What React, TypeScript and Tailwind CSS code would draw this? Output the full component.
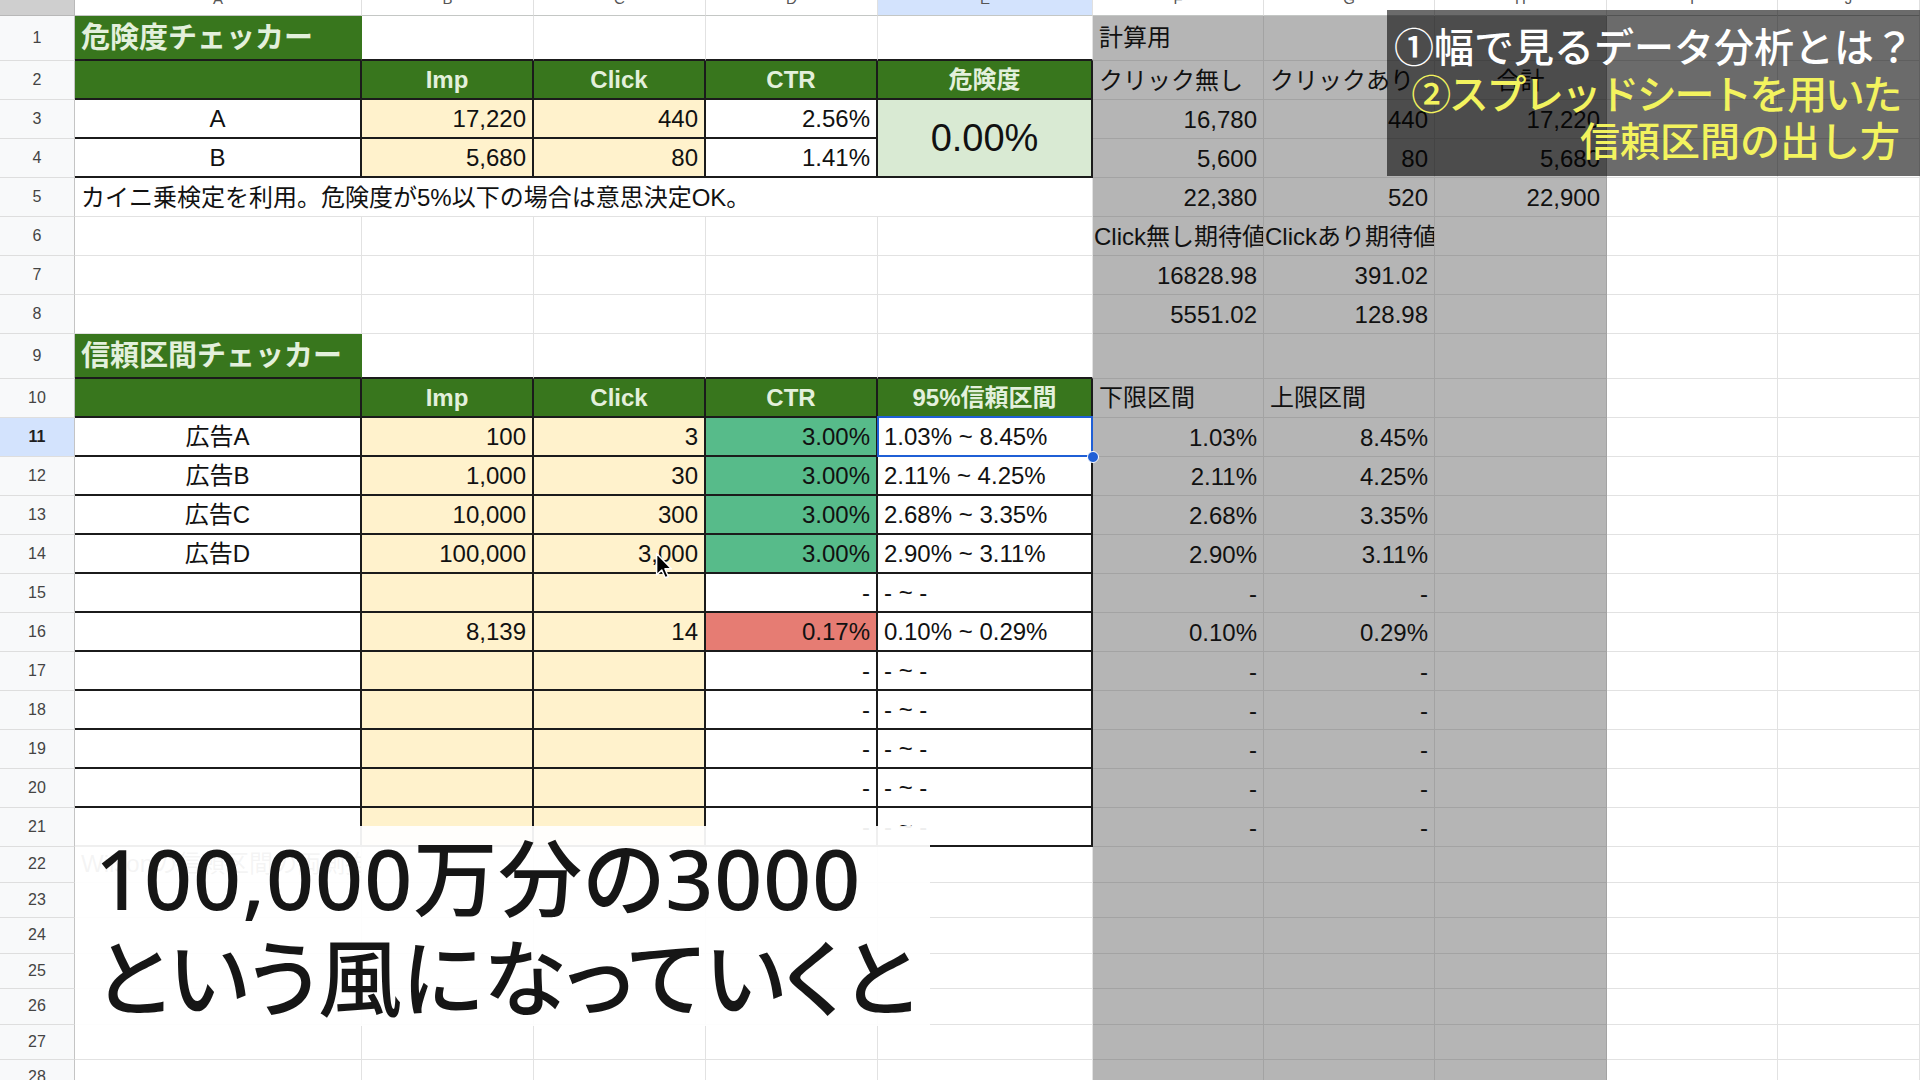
import { Fragment } from 'react';
import clsx from 'clsx';

type Kind = 'w' | 'g' | 'dg' | 'y' | 'lg' | 'cg' | 'rd';
type Align = 'l' | 'l0' | 'c' | 'r';

type Cell = {
  k: Kind;
  t?: string;
  a?: Align;
  b?: boolean; // black bottom border
  r?: boolean; // black right border
  mid?: boolean; // vertically centred
  x?: string; // extra classes
  span?: string;
  sel?: boolean;
};

// background + gridline colour per fill
const KIND: Record<Kind, { bg: string; gb: string; gr: string }> = {
  w: { bg: 'bg-white', gb: 'border-b-[#e2e2e2]', gr: 'border-r-[#e2e2e2]' },
  g: { bg: 'bg-[#b5b5b5]', gb: 'border-b-[#a3a3a3]', gr: 'border-r-[#a3a3a3]' },
  dg: { bg: 'bg-[#38761d]', gb: 'border-b-[#38761d]', gr: 'border-r-[#38761d]' },
  y: { bg: 'bg-[#fff2cc]', gb: 'border-b-[#fff2cc]', gr: 'border-r-[#fff2cc]' },
  lg: { bg: 'bg-[#d9ead3]', gb: 'border-b-[#d9ead3]', gr: 'border-r-[#d9ead3]' },
  cg: { bg: 'bg-[#57bb8a]', gb: 'border-b-[#57bb8a]', gr: 'border-r-[#57bb8a]' },
  rd: { bg: 'bg-[#e67c73]', gb: 'border-b-[#e67c73]', gr: 'border-r-[#e67c73]' },
};

const ALIGN: Record<Align, string> = {
  l: 'justify-start pl-[6px]',
  l0: 'justify-start pl-[1px] text-[23px]',
  c: 'justify-center',
  r: 'justify-end pr-[6px]',
};

const TITLE = 'text-[29px] font-bold text-[#e3f0dc]';
const HEAD = 'text-[21px] font-bold text-[#e3f0dc]';

const w = (t?: string, o: Partial<Cell> = {}): Cell => ({ k: 'w', t, ...o });
const g = (t?: string, a: Align = 'r'): Cell => ({ k: 'g', t, a });
const box = (k: Kind, t: string, a: Align, o: Partial<Cell> = {}): Cell => ({ k, t, a, b: true, r: true, ...o });
const hd = (t: string): Cell => ({ k: 'dg', t, a: 'c', b: true, r: true, mid: true, x: HEAD });
const blank = (): Cell[] => [w(), w(), w(), w(), w(), g(), g(), g(), w(), w()];

const ads: [string, string, string, Kind, string, string, string, string][] = [
  ['広告A', '100', '3', 'cg', '3.00%', '1.03% ~ 8.45%', '1.03%', '8.45%'],
  ['広告B', '1,000', '30', 'cg', '3.00%', '2.11% ~ 4.25%', '2.11%', '4.25%'],
  ['広告C', '10,000', '300', 'cg', '3.00%', '2.68% ~ 3.35%', '2.68%', '3.35%'],
  ['広告D', '100,000', '3,000', 'cg', '3.00%', '2.90% ~ 3.11%', '2.90%', '3.11%'],
  ['', '', '', 'w', '-', '- ~ -', '-', '-'],
  ['', '8,139', '14', 'rd', '0.17%', '0.10% ~ 0.29%', '0.10%', '0.29%'],
  ['', '', '', 'w', '-', '- ~ -', '-', '-'],
  ['', '', '', 'w', '-', '- ~ -', '-', '-'],
  ['', '', '', 'w', '-', '- ~ -', '-', '-'],
  ['', '', '', 'w', '-', '- ~ -', '-', '-'],
  ['', '', '', 'w', '-', '- ~ -', '-', '-'],
];

const ROWS: Cell[][] = [
  [
    { k: 'dg', t: '危険度チェッカー', a: 'l', b: true, mid: true, x: TITLE },
    w('', { b: true }), w('', { b: true }), w('', { b: true }), w('', { b: true }),
    { k: 'g', t: '計算用', a: 'l', mid: true }, g(), g(), w(), w(),
  ],
  [
    hd(''), hd('Imp'), hd('Click'), hd('CTR'), hd('危険度'),
    g('クリック無し', 'l'), g('クリックあり', 'l'), g('合計', 'c'), w(), w(),
  ],
  [
    box('w', 'A', 'c'), box('y', '17,220', 'r'), box('y', '440', 'r'), box('w', '2.56%', 'r'),
    box('lg', '0.00%', 'c', { mid: true, span: 'row-span-2', x: 'text-[38px] leading-[44px]' }),
    g('16,780'), g('440'), g('17,220'), w(), w(),
  ],
  [
    box('w', 'B', 'c'), box('y', '5,680', 'r'), box('y', '80', 'r'), box('w', '1.41%', 'r'),
    g('5,600'), g('80'), g('5,680'), w(), w(),
  ],
  [
    w('カイニ乗検定を利用。危険度が5%以下の場合は意思決定OK。', { a: 'l', span: 'col-span-5' }),
    g('22,380'), g('520'), g('22,900'), w(), w(),
  ],
  [w(), w(), w(), w(), w(), g('Click無し期待値', 'l0'), g('Clickあり期待値', 'l0'), g(), w(), w()],
  [w(), w(), w(), w(), w(), g('16828.98'), g('391.02'), g(), w(), w()],
  [w(), w(), w(), w(), w(), g('5551.02'), g('128.98'), g(), w(), w()],
  [
    { k: 'dg', t: '信頼区間チェッカー', a: 'l', b: true, mid: true, x: TITLE },
    w('', { b: true }), w('', { b: true }), w('', { b: true }), w('', { b: true }),
    g(), g(), g(), w(), w(),
  ],
  [
    hd(''), hd('Imp'), hd('Click'), hd('CTR'), hd('95%信頼区間'),
    { k: 'g', t: '下限区間', a: 'l', mid: true }, { k: 'g', t: '上限区間', a: 'l', mid: true }, g(), w(), w(),
  ],
  ...ads.map(([name, imp, click, kind, ctr, range, lo, hi], i) => [
    box('w', name, 'c'),
    box('y', imp, 'r'),
    box('y', click, 'r'),
    box(kind, ctr, 'r'),
    box('w', range, 'l', { sel: i === 0 }),
    g(lo), g(hi), g(), w(), w(),
  ]),
  [w('Wilsonの信頼区間の両側推定', { a: 'l', x: 'text-[#666]' }), w(), w(), w(), w(), g(), g(), g(), w(), w()],
  blank(), blank(), blank(), blank(), blank(), blank(),
];

const COLS = ['A', 'B', 'C', 'D', 'E', 'F', 'G', 'H', 'I', 'J'];

function SheetCell({ c }: { c: Cell }) {
  const kind = KIND[c.k];
  return (
    <div
      className={clsx(
        'flex min-w-0 whitespace-nowrap text-[24px] leading-[28px]',
        c.sel ? 'relative overflow-visible' : 'overflow-hidden',
        kind.bg,
        c.b ? 'border-b-2 border-b-[#1b1b1b]' : ['border-b', kind.gb],
        c.r ? 'border-r-2 border-r-[#1b1b1b]' : ['border-r', kind.gr],
        c.mid ? 'items-center' : 'items-end pb-[4px]',
        ALIGN[c.a ?? 'r'],
        c.span,
        c.x,
      )}
    >
      {c.t}
      {c.sel ? (
        <>
          <span className="pointer-events-none absolute -top-[2px] -right-[2px] -bottom-[2px] -left-[1px] border-2 border-[#1f5fd6]" />
          <span className="absolute -right-[8px] -bottom-[8px] z-10 h-[12px] w-[12px] rounded-full border border-white bg-[#1f5fd6]" />
        </>
      ) : null}
    </div>
  );
}

function RowHead({ n }: { n: number }) {
  return (
    <div
      className={clsx(
        'flex items-center justify-center border-r border-b border-r-[#c4c4c4] border-b-[#dedede] text-[16px]',
        n === 11 ? 'bg-[#d3e3fd] font-bold text-[#1f1f1f]' : 'bg-[#f8f9fa] text-[#444]',
      )}
    >
      {n}
    </div>
  );
}

export default function App() {
  return (
    <div className="relative h-[1080px] w-[1920px] overflow-hidden bg-white font-['Liberation_Sans','Noto_Sans_CJK_JP',sans-serif] text-[#111]">
      <div className="grid grid-cols-[75px_287px_172px_172px_172px_215px_171px_171px_172px_171px_142px] grid-rows-[16px_45px_repeat(7,39px)_45px_repeat(12,39px)_repeat(7,35.5px)]">
        {/* column headers, scrolled mostly out of view */}
        <div className="border-r border-b border-r-[#b8b8b8] border-b-[#b8b8b8] bg-[#cfcfcf]" />
        {COLS.map((l) => (
          <div
            key={l}
            className={clsx(
              'flex justify-center overflow-hidden border-r border-b border-r-[#e0e0e0] border-b-[#c4c7c5] text-[15px] leading-[20px] text-[#555]',
              l === 'E' ? 'bg-[#d3e3fd]' : 'bg-white',
            )}
          >
            <span className="-mt-[11px]">{l}</span>
          </div>
        ))}

        {ROWS.map((row, i) => (
          <Fragment key={i}>
            <RowHead n={i + 1} />
            {row.map((c, j) => (
              <SheetCell key={j} c={c} />
            ))}
          </Fragment>
        ))}
      </div>

      {/* mouse pointer */}
      <svg className="absolute left-[655px] top-[552px]" width="18" height="28" viewBox="0 0 12 19">
        <path
          d="M1 1 L1 15.5 L4.5 12.2 L6.8 17.5 L8.9 16.6 L6.6 11.4 L11 11.4 Z"
          fill="#000"
          stroke="#fff"
          strokeWidth="1"
          strokeLinejoin="round"
        />
      </svg>

      {/* video title overlay */}
      <div className="absolute top-[10px] right-0 left-[1387px] flex h-[166px] flex-col items-end whitespace-nowrap bg-black/[0.58] pt-[12px] font-['Noto_Sans_CJK_JP',sans-serif] text-[40px] font-medium leading-[47px]">
        <div className="pr-[6px] text-white">①幅で見るデータ分析とは？</div>
        <div className="pr-[20px] tracking-[-2.4px] text-[#f3f35e]">②スプレッドシートを用いた</div>
        <div className="pr-[20px] text-[#f3f35e]">信頼区間の出し方</div>
      </div>

      {/* subtitle */}
      <div className="absolute top-[826px] left-[75px] h-[200px] w-[855px] bg-white/[0.93] pt-[2px] pl-[20px] font-['Noto_Sans','Noto_Sans_CJK_JP',sans-serif] text-[84px] font-medium leading-[100px] text-[#161616] [font-feature-settings:'palt']">
        <div className="tracking-[1px]">100,000万分の3000</div>
        <div>という風になっていくと</div>
      </div>
    </div>
  );
}
